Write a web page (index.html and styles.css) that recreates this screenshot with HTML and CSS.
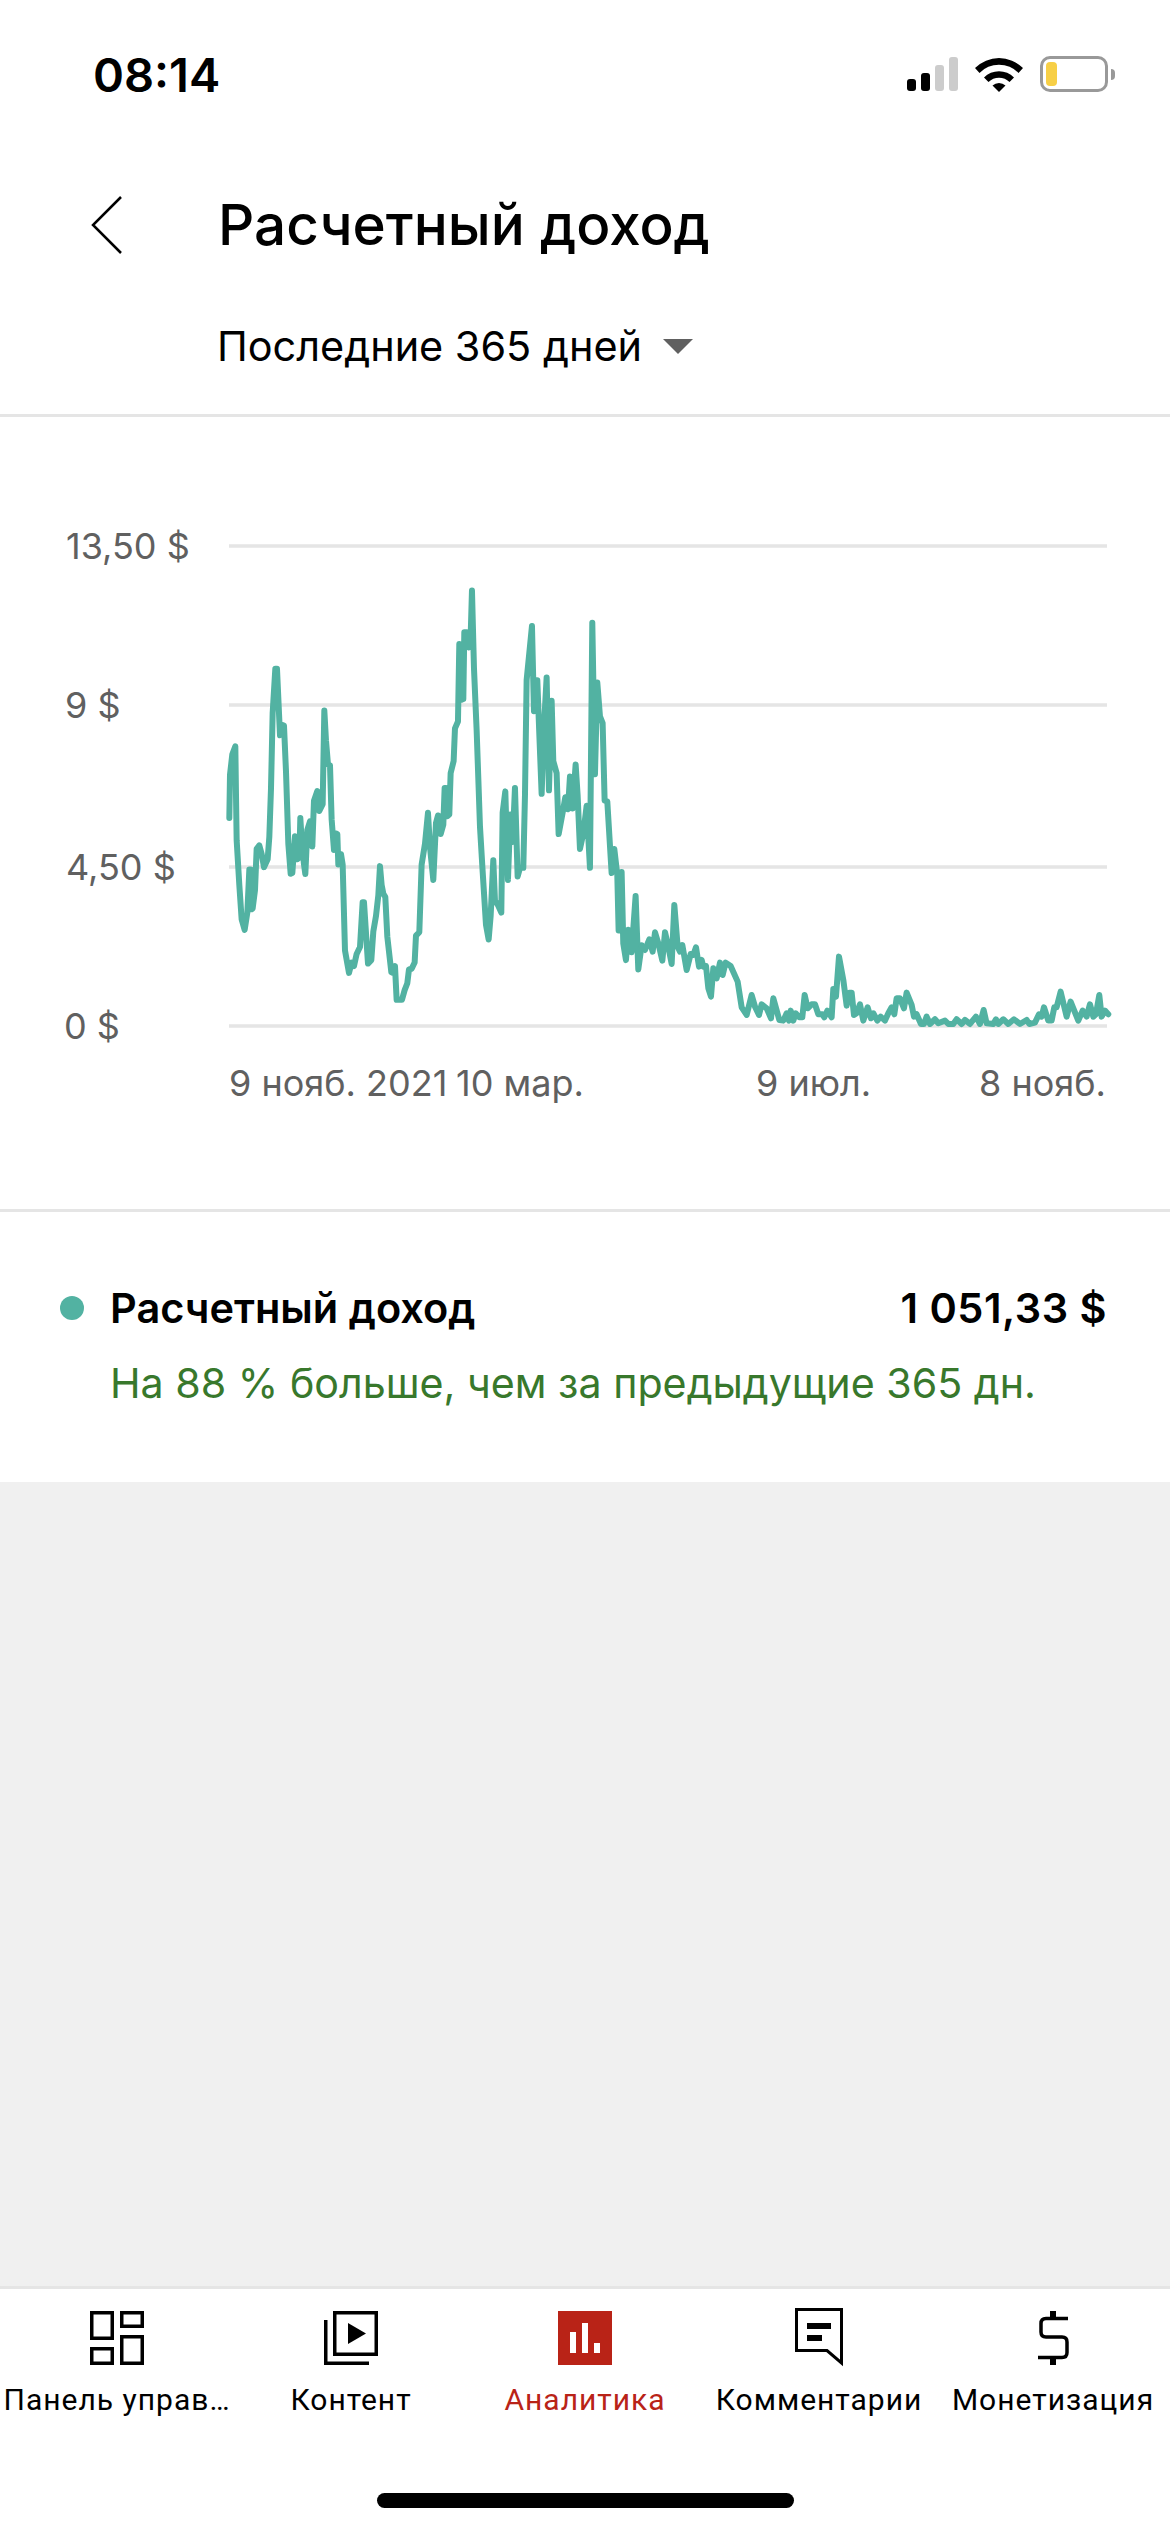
FILE: index.html
```html
<!DOCTYPE html>
<html lang="ru">
<head>
    <meta charset="UTF-8">
    <meta name="viewport" content="width=device-width, initial-scale=1.0">
    <title>Расчетный доход</title>
    <link rel="stylesheet" href="styles.css">
</head>
<body>
    <div class="status-bar">
        <span class="time">08:14</span>
        <div class="status-icons">
            <svg class="signal" width="51" height="34" viewBox="0 0 51 34">
                <rect x="0" y="22" width="9" height="12" rx="3" fill="#000"/>
                <rect x="14" y="16" width="9" height="18" rx="3" fill="#000"/>
                <rect x="28" y="8" width="9" height="26" rx="3" fill="#ccc"/>
                <rect x="42" y="0" width="9" height="34" rx="3" fill="#ccc"/>
            </svg>
            <svg class="wifi" width="48" height="36" viewBox="0 0 48 36">
                <path d="M0 12A34 34 0 0 1 48 12L43.500 17A27 27 0 0 0 4.500 17Z"/>
                <path d="M9 21.500A21 21 0 0 1 39 21.500L34.500 26A15 15 0 0 0 13.500 26Z"/>
                <path d="M24 36L17.500 29.500A9.500 9.500 0 0 1 30.500 29.500Z"/>
            </svg>
            <div class="battery">
                <div class="battery-level"></div>
            </div>
            <div class="battery-nub"></div>
        </div>
    </div>

    <header class="page-head">
        <div class="title-row">
            <svg class="back" width="31" height="58" viewBox="0 0 31 58">
                <path d="M30 1L2 29L30 57" fill="none" stroke="#000" stroke-width="2.500"/>
            </svg>
            <h1>Расчетный доход</h1>
        </div>
        <div class="period">
            <span>Последние 365 дней</span>
            <span class="caret"></span>
        </div>
    </header>

    <section class="chart">
        <svg class="chart-svg" width="1170" height="792" viewBox="0 417 1170 792">
            <line class="grid" x1="229" y1="546" x2="1107" y2="546"/>
            <line class="grid" x1="229" y1="705" x2="1107" y2="705"/>
            <line class="grid" x1="229" y1="867" x2="1107" y2="867"/>
            <line class="grid" x1="229" y1="1026" x2="1107" y2="1026"/>
            <text class="axis" x="66" y="559">13,50 $</text>
            <text class="axis" x="65" y="718">9 $</text>
            <text class="axis" x="66" y="880">4,50 $</text>
            <text class="axis" x="64" y="1039">0 $</text>
            <text class="axis" x="229" y="1096">9 нояб. 2021</text>
            <text class="axis" x="456" y="1096">10 мар.</text>
            <text class="axis" x="756" y="1096">9 июл.</text>
            <text class="axis" x="979" y="1096">8 нояб.</text>
            <polyline class="line" transform="translate(200 520) scale(.3333 .3444)" points="88,865 90,740 97,680 106,657 108,800 110,930 118,1060 125,1160 134,1190 142,1140 148,1015 152,1015 155,1130 158,1128 165,1075 170,955 178,945 185,970 192,1008 203,985 208,920 213,780 218,560 226,432 231,432 240,625 246,595 252,597 258,730 265,940 272,1027 277,1025 285,918 292,985 298,980 301,865 305,930 312,1000 316,1028 322,900 330,875 337,948 342,815 352,787 358,845 368,825 373,553 378,640 384,710 390,712 395,870 402,958 408,910 412,912 415,1000 423,970 428,1000 435,1250 447,1315 455,1285 462,1295 470,1260 480,1240 488,1110 492,1110 504,1288 514,1278 520,1195 528,1150 535,1090 540,1005 545,1060 550,1085 556,1095 562,1210 574,1313 578,1315 585,1295 590,1393 606,1393 614,1365 622,1345 627,1305 635,1303 644,1285 648,1207 658,1197 665,1000 675,940 684,850 690,950 700,1045 708,880 714,858 718,860 722,912 730,885 734,778 738,778 742,860 748,855 752,735 761,700 765,605 774,585 778,360 785,522 790,520 793,326 800,326 806,370 812,340 816,205 822,430 830,610 840,890 848,1020 858,1175 866,1218 872,1150 880,988 885,1105 895,1120 904,1140 908,850 916,788 924,1045 931,855 938,935 945,778 953,1035 960,1010 970,1010 975,800 980,465 996,308 1002,555 1006,465 1012,465 1018,620 1025,795 1032,600 1040,457 1047,785 1055,525 1060,700 1070,735 1076,912 1088,850 1096,805 1104,840 1110,745 1118,838 1127,710 1133,800 1140,955 1150,910 1160,830 1170,1010 1177,298 1185,738 1192,472 1200,570 1208,590 1214,815 1222,817 1235,1025 1243,955 1252,1030 1256,1192 1265,1022 1270,1230 1278,1278 1285,1190 1295,1255 1307,1092 1315,1305 1325,1235"/>
            <polyline class="line" transform="translate(640 600) scale(.3333)" points="5,1040 15,1050 28,1018 38,1055 45,997 55,1030 67,1082 75,997 85,1040 95,1092 103,915 113,1040 120,1055 127,1035 140,1110 152,1062 160,1065 168,1042 177,1100 185,1080 190,1100 198,1098 205,1165 213,1190 220,1105 230,1135 240,1088 248,1125 257,1088 272,1098 293,1145 305,1222 320,1245 335,1185 345,1220 357,1245 365,1213 380,1225 393,1255 400,1195 418,1260 430,1262 440,1240 447,1262 452,1232 460,1262 467,1240 478,1252 487,1252 494,1185 503,1225 515,1213 525,1213 535,1243 547,1243 553,1252 562,1232 575,1252 580,1167 588,1190 597,1070 610,1140 620,1217 628,1178 635,1178 642,1245 650,1240 660,1213 670,1262 683,1222 693,1255 700,1240 712,1262 722,1250 735,1262 745,1240 755,1222 763,1243 770,1195 780,1195 792,1225 800,1178 815,1215 822,1250 830,1243 843,1272 852,1272 860,1250 870,1272 885,1258 895,1270 915,1262 925,1272 940,1272 950,1258 965,1272 975,1260 990,1272 1008,1250 1020,1272 1031,1230 1040,1270 1060,1272 1068,1258 1075,1272 1090,1258 1105,1272 1122,1258 1140,1272 1160,1260 1168,1272 1185,1268 1197,1243 1205,1250 1212,1222 1225,1262 1235,1262 1243,1222 1250,1222 1262,1175 1280,1250 1292,1205 1315,1262 1328,1232 1340,1250 1350,1213 1360,1250 1368,1243 1378,1185 1385,1250 1395,1232 1405,1243"/>
        </svg>
    </section>

    <section class="summary">
        <div class="summary-row">
            <span class="dot"></span>
            <span class="summary-name">Расчетный доход</span>
            <span class="summary-value">1 051,33 $</span>
        </div>
        <p class="summary-note">На 88 % больше, чем за предыдущие 365 дн.</p>
    </section>

    <main class="empty"></main>

    <nav class="tabbar">
        <ul class="tabs">
            <li class="tab">
                <svg width="54" height="54" viewBox="0 0 54 54" fill="none" stroke="#000" stroke-width="3.500">
                    <rect x="1.750" y="1.750" width="20.500" height="25.500"/>
                    <rect x="1.750" y="37.750" width="20.500" height="14.500"/>
                    <rect x="31.750" y="1.750" width="20.500" height="13.500"/>
                    <rect x="31.750" y="25.750" width="20.500" height="26.500"/>
                </svg>
                <span>Панель управ…</span>
            </li>
            <li class="tab">
                <svg width="54" height="54" viewBox="0 0 54 54" fill="none" stroke="#000" stroke-width="3.500">
                    <rect x="10.750" y="1.750" width="41.500" height="41.500"/>
                    <path d="M1.750 9V52.250H45"/>
                    <path d="M24 12L42 22.500L24 33Z" fill="#000" stroke="none"/>
                </svg>
                <span>Контент</span>
            </li>
            <li class="tab active">
                <svg width="54" height="54" viewBox="0 0 54 54">
                    <rect width="54" height="54" fill="#b92317"/>
                    <rect x="12" y="21" width="6" height="21" fill="#fff"/>
                    <rect x="24" y="12" width="6" height="30" fill="#fff"/>
                    <rect x="36" y="32" width="6" height="10" fill="#fff"/>
                </svg>
                <span>Аналитика</span>
            </li>
            <li class="tab">
                <svg class="over" width="54" height="54" viewBox="0 0 54 54" fill="none" stroke="#000" stroke-width="3">
                    <path d="M4.500 -1.500H49.500V52L35 39.500H4.500Z"/>
                    <rect x="15" y="12" width="24" height="6" fill="#000" stroke="none"/>
                    <rect x="15" y="24" width="15" height="6" fill="#000" stroke="none"/>
                </svg>
                <span>Комментарии</span>
            </li>
            <li class="tab">
                <svg width="54" height="54" viewBox="0 0 54 54" fill="none" stroke="#000" stroke-width="3.500">
                    <path d="M42 7.500H20Q15 7.500 15 12.500V21Q15 26 20 26H36Q41 26 41 31V41.500Q41 46.500 36 46.500H12"/>
                    <rect x="24" y="0" width="6" height="7" fill="#000" stroke="none"/>
                    <rect x="24" y="47" width="6" height="7" fill="#000" stroke="none"/>
                </svg>
                <span>Монетизация</span>
            </li>
        </ul>
        <div class="home-bar"></div>
    </nav>
</body>
</html>
```

FILE: styles.css
```css
* {
    box-sizing: border-box;
}
html, body {
    margin: 0;
    padding: 0;
    height: 2532px;
}
body {
    display: flex;
    flex-direction: column;
    font-family: Inter, sans-serif;
    background-color: #fff;
    color: #000;
}

/* status bar */
.status-bar {
    display: flex;
    justify-content: space-between;
    align-items: center;
    height: 148px;
    padding: 0 55px 0 93px;
}
.time {
    font-size: 47px;
    font-weight: 600;
}
.status-icons {
    display: flex;
    align-items: center;
}
.signal {
    margin-right: 17px;
}
.wifi {
    margin-right: 17px;
}
.battery {
    width: 68px;
    height: 36px;
    padding: 3px;
    border: 3px solid #999;
    border-radius: 10px;
}
.battery-level {
    width: 11px;
    height: 24px;
    background-color: #f7cf46;
    border-radius: 4px;
}
.battery-nub {
    width: 4px;
    height: 11px;
    margin-left: 3px;
    background-color: #999;
    border-radius: 0 6px 6px 0;
}

/* page title */
.title-row {
    display: flex;
    align-items: center;
    height: 154px;
    padding-left: 91px;
}
.back {
    margin-right: 96px;
}
h1 {
    margin: 0;
    font-size: 56.600px;
    font-weight: 500;
    line-height: 64px;
}
.period {
    display: flex;
    align-items: center;
    height: 115px;
    padding: 0 0 24px 217px;
    border-bottom: 3px solid #e5e5e5;
    font-size: 41.400px;
}
.caret {
    width: 0;
    height: 0;
    margin-left: 21px;
    border-left: 15px solid transparent;
    border-right: 15px solid transparent;
    border-top: 15px solid #606060;
}

/* chart */
.chart {
    height: 795px;
    border-bottom: 3px solid #e5e5e5;
}
.chart-svg {
    display: block;
}
.grid {
    stroke: #e5e5e5;
    stroke-width: 3.500;
}
.axis {
    font-family: Inter, sans-serif;
    font-size: 36px;
    fill: #606060;
}
.line {
    fill: none;
    stroke: #52b2a2;
    stroke-width: 6;
    stroke-linejoin: round;
    stroke-linecap: round;
    vector-effect: non-scaling-stroke;
}

/* summary */
.summary {
    height: 270px;
    padding: 72px 63px 0 60px;
}
.summary-row {
    display: flex;
    align-items: center;
    height: 48px;
}
.dot {
    width: 24px;
    height: 24px;
    margin-right: 26px;
    border-radius: 50%;
    background-color: #52b2a2;
}
.summary-name {
    flex: 1;
    font-size: 41.500px;
    font-weight: 600;
}
.summary-value {
    font-size: 41.500px;
    font-weight: 600;
    letter-spacing: 0.500px;
}
.summary-note {
    margin: 27px 0 0 50px;
    font-size: 41.200px;
    line-height: 48px;
    color: #38782c;
}

.empty {
    flex: 1;
    background-color: #f0f0f0;
}

/* bottom tabs */
.tabbar {
    display: flex;
    flex-direction: column;
    height: 246px;
    border-top: 3px solid #e5e5e5;
}
.tabs {
    display: grid;
    grid-template-columns: repeat(5, 1fr);
    margin: 0;
    padding: 22px 0 0;
    list-style: none;
}
.tab {
    display: flex;
    flex-direction: column;
    align-items: center;
    gap: 15px;
    font-family: Roboto, sans-serif;
    font-size: 30px;
    line-height: 40px;
    letter-spacing: 1px;
    white-space: nowrap;
}
.tab svg {
    display: block;
}
.tab .over {
    overflow: visible;
}
.active {
    color: #b92317;
}
.home-bar {
    align-self: center;
    width: 417px;
    height: 15px;
    margin-top: auto;
    margin-bottom: 24px;
    background-color: #000;
    border-radius: 8px;
}
```
